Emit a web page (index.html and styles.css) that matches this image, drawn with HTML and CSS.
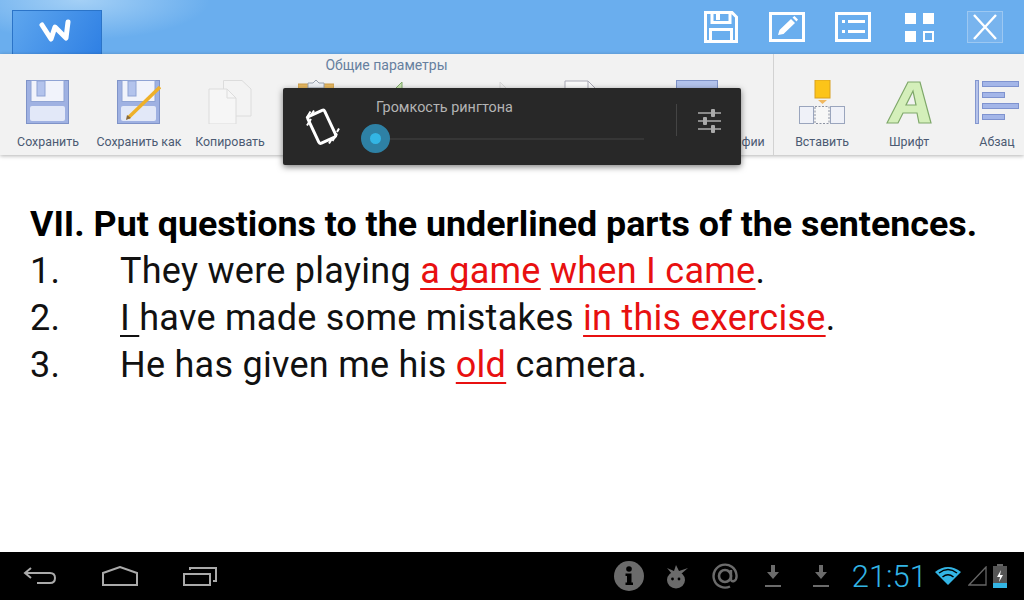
FILE: index.html
```html
<!DOCTYPE html>
<html lang="ru">
<head>
    <meta charset="UTF-8">
    <meta name="viewport" content="width=device-width, initial-scale=1.0">
    <title>Документ</title>
    <link rel="stylesheet" href="styles.css">
</head>
<body>
    <header class="topbar">
        <button class="logo">
            <svg width="40" height="30" viewBox="0 0 40 30"><path d="M5 7 L14 21 L18 9 L29 20 L31 4" fill="none" stroke="#fff" stroke-width="5" stroke-linecap="round" stroke-linejoin="round"/></svg>
        </button>
        <div class="top-icons">
            <div class="top-icon">
                <svg width="34" height="32" viewBox="0 0 34 32"><path d="M1.5 1.5H28L32.5 6V30.5H1.5Z M8 1.5V11.5H26V1.5 M6.5 31V18.5H27.5V31" fill="none" stroke="#fff" stroke-width="3"/><rect x="12" y="3" width="4" height="6" fill="#fff"/></svg>
            </div>
            <div class="top-icon">
                <svg width="36" height="30" viewBox="0 0 36 30"><rect x="1.5" y="1.5" width="33" height="27" fill="none" stroke="#fff" stroke-width="3"/><path d="M9 23 L10.5 18 L22 7 L26 11 L14.5 22 Z M23.5 5.5 L25.5 4 L29 7.5 L27.5 9.5 Z" fill="#fff"/></svg>
            </div>
            <div class="top-icon">
                <svg width="36" height="30" viewBox="0 0 36 30"><rect x="1.5" y="1.5" width="33" height="27" fill="none" stroke="#fff" stroke-width="3"/><path d="M7 9.5H10 M13 9.5H30 M7 19.5H10 M13 19.5H30" stroke="#fff" stroke-width="3"/></svg>
            </div>
            <div class="top-icon">
                <svg width="29" height="29" viewBox="0 0 29 29"><rect width="11" height="11" fill="#fff"/><rect x="18" width="11" height="11" fill="#fff"/><rect y="18" width="11" height="11" fill="#fff"/><rect x="19" y="19" width="9" height="9" fill="none" stroke="#fff" stroke-width="2"/></svg>
            </div>
            <div class="top-icon">
                <svg width="36" height="32" viewBox="0 0 36 32"><rect x="0.5" y="0.5" width="35" height="31" fill="#78b4ee" stroke="#9cc8f2"/><path d="M7 4 L29 28 M29 4 L7 28" stroke="#fff" stroke-width="2.4"/></svg>
            </div>
        </div>
    </header>

    <section class="ribbon">
        <div class="group group-main">
            <div class="group-title">Общие параметры</div>
            <div class="tools">
                <div class="tool">
                    <svg width="44" height="44" viewBox="0 0 44 44"><rect x="0.5" y="0.5" width="42" height="43" fill="#9fb1e2" stroke="#7f93c8"/><rect x="5" y="0.5" width="33" height="21" fill="#f1f3fb" stroke="#8fa3d4"/><rect x="11" y="1" width="8" height="15" fill="#b3c3ec" stroke="#8fa3d4"/><rect x="4" y="26" width="35" height="15" rx="2" fill="#e2e8f8"/></svg>
                    <span>Сохранить</span>
                </div>
                <div class="tool">
                    <svg width="44" height="44" viewBox="0 0 44 44"><rect x="0.5" y="0.5" width="42" height="43" fill="#9fb1e2" stroke="#7f93c8"/><rect x="5" y="0.5" width="33" height="21" fill="#f1f3fb" stroke="#8fa3d4"/><rect x="11" y="1" width="8" height="15" fill="#b3c3ec" stroke="#8fa3d4"/><rect x="4" y="26" width="35" height="15" rx="2" fill="#e2e8f8"/><path d="M11 38 L43 7" stroke="#eeb02a" stroke-width="3.5"/><path d="M9 40 L10 35 L14 38 Z" fill="#8a6a3a"/></svg>
                    <span>Сохранить как</span>
                </div>
                <div class="tool">
                    <svg width="44" height="44" viewBox="0 0 44 44"><path d="M15.5 0.5H34L43 9V36H15.5Z" fill="#f3f3f3" stroke="#dcdcdc"/><path d="M1 9H19L28 18V44H1Z" fill="#f6f6f6" stroke="#dcdcdc"/><path d="M19 9V18H28" fill="none" stroke="#dcdcdc"/></svg>
                    <span>Копировать</span>
                </div>
                <div class="tool">
                    <svg width="36" height="44" viewBox="0 0 36 44"><rect y="4" width="36" height="40" fill="#e8b960" stroke="#c99c48"/><path d="M10 8V3H15L18 0L21 3H26V8Z" fill="#eceff4" stroke="#9aa3b0"/></svg>
                    <span>Вставить</span>
                </div>
                <div class="tool">
                    <svg width="44" height="44" viewBox="0 0 44 44"><path d="M2 22 L22 2 V12 H42 V32 H22 V42 Z" fill="#cbe6b4" stroke="#7fa86a"/></svg>
                    <span>Отменить</span>
                </div>
                <div class="tool">
                    <svg width="44" height="44" viewBox="0 0 44 44"><path d="M42 22 L22 2 V12 H2 V32 H22 V42 Z" fill="#efefef" stroke="#d8d8d8"/></svg>
                    <span>Вернуть</span>
                </div>
                <div class="tool">
                    <svg width="34" height="44" viewBox="0 0 34 44"><path d="M1 1H24L33 10V43H1Z" fill="#fafafa" stroke="#a9a9b5"/><path d="M24 1V10H33" fill="none" stroke="#a9a9b5"/></svg>
                    <span>Поиск</span>
                </div>
                <div class="tool tool-last">
                    <svg width="42" height="44" viewBox="0 0 42 44"><rect x="0.5" y="0.5" width="41" height="43" fill="#b3c3ec" stroke="#7f93c8"/></svg>
                    <span>Параметры фотографии</span>
                </div>
            </div>
        </div>
        <div class="group">
            <div class="group-title">&nbsp;</div>
            <div class="tools tools-right">
                <div class="tool">
                    <svg width="46" height="44" viewBox="0 0 46 44"><rect x="16" y="0" width="15" height="18" fill="#fcc419" stroke="#d8a020"/><path d="M19 20H28L23.5 24Z" fill="#f0b860"/><rect x="0.5" y="26.5" width="14" height="17" fill="#eff1f8" stroke="#9aa5bd"/><rect x="16" y="26.5" width="14" height="17" fill="#f7f7f7" stroke="#8c93a3" stroke-dasharray="2 1.5"/><rect x="31.5" y="26.5" width="14" height="17" fill="#eff1f8" stroke="#9aa5bd"/></svg>
                    <span>Вставить</span>
                </div>
                <div class="tool">
                    <svg width="46" height="44" viewBox="0 0 46 44"><path d="M1 43 L22 2 H34 L45 43 H33 L31 33 H17 L12 43 Z M20 25 H30 L27 11 Z" fill="#d4efba" fill-rule="evenodd" stroke="#7fa86a" stroke-width="1.2"/></svg>
                    <span>Шрифт</span>
                </div>
                <div class="tool">
                    <svg width="44" height="44" viewBox="0 0 44 44"><rect x="0.5" y="0.5" width="3" height="43" fill="#b6c3ea" stroke="#8497cf"/><rect x="7.5" y="1.5" width="36" height="5" fill="#a4b6e8" stroke="#7f93cf"/><rect x="7.5" y="12.5" width="22" height="5" fill="#a4b6e8" stroke="#7f93cf"/><rect x="7.5" y="23.5" width="36" height="5" fill="#a4b6e8" stroke="#7f93cf"/><rect x="7.5" y="34.5" width="22" height="5" fill="#a4b6e8" stroke="#7f93cf"/></svg>
                    <span>Абзац</span>
                </div>
            </div>
        </div>

        <div class="volume-panel">
            <div class="volume-icon">
                <svg width="36" height="38" viewBox="0 0 36 38"><rect x="8.5" y="5" width="18.5" height="29.5" rx="2" transform="rotate(-25 17.7 19.7)" fill="none" stroke="#fff" stroke-width="3"/><path d="M2.5 11 L6.5 4.5 M3 18.5 L7 12 M7.5 7.5 L10 3.5 M28.5 34 L33 26.5 M33 25 L35 21.5 M25 36.5 L27.5 32.5" stroke="#fff" stroke-width="2"/></svg>
            </div>
            <div class="volume-body">
                <div class="volume-label">Громкость рингтона</div>
                <div class="volume-track"><div class="volume-thumb"></div></div>
            </div>
            <div class="volume-settings">
                <svg width="26" height="26" viewBox="0 0 26 26"><path d="M1 5H24 M1 13H24 M1 21H24" stroke="#aaa" stroke-width="1.3"/><rect x="14" y="1" width="4" height="8" rx="1" fill="#aaa"/><rect x="6" y="9" width="4" height="8" rx="1" fill="#aaa"/><rect x="14" y="17" width="4" height="8" rx="1" fill="#aaa"/></svg>
            </div>
        </div>
    </section>

    <main class="doc">
        <p class="doc-title">VII. Put questions to the underlined parts of the sentences.</p>
        <div class="doc-line"><span>1.</span><p>They were playing <u class="red">a game</u> <u class="red">when I came</u>.</p></div>
        <div class="doc-line"><span>2.</span><p><u>I </u>have made some mistakes <u class="red">in this exercise</u>.</p></div>
        <div class="doc-line"><span>3.</span><p>He has given me his <u class="red">old</u> camera.</p></div>
    </main>

    <footer class="navbar">
        <div class="nav-keys">
            <div class="nav-key">
                <svg width="34" height="20" viewBox="0 0 34 20"><path d="M8 2 L2 7 L8 12 M2 7 H27 Q32 7 32 12 Q32 17 27 17 H14" fill="none" stroke="#aaa" stroke-width="2"/></svg>
            </div>
            <div class="nav-key">
                <svg width="38" height="20" viewBox="0 0 38 20"><path d="M2 7 L19 1 L36 7 V19 H2 Z" fill="none" stroke="#aaa" stroke-width="2"/></svg>
            </div>
            <div class="nav-key">
                <svg width="34" height="20" viewBox="0 0 34 20"><rect x="1" y="8" width="26" height="11" fill="none" stroke="#aaa" stroke-width="2"/><path d="M7 4 V2 H33 V15 H30" fill="none" stroke="#aaa" stroke-width="2"/></svg>
            </div>
        </div>
        <div class="status">
            <div class="status-icon">
                <svg width="30" height="30" viewBox="0 0 30 30"><circle cx="15" cy="15" r="15" fill="#6b6b6b"/><circle cx="15" cy="8" r="2.8" fill="#000"/><path d="M11.5 12.5H17.5V21.5H19V24H11.5V21.5H13V15H11.5Z" fill="#000"/></svg>
            </div>
            <div class="status-icon">
                <svg width="24" height="26" viewBox="0 0 24 26"><ellipse cx="11" cy="17" rx="9" ry="8.5" fill="#6b6b6b"/><path d="M2 5 L9 8 L11 2 L14 8 L23 5 L16 11 H7Z" fill="#6b6b6b"/><circle cx="7.5" cy="16" r="1.4" fill="#000"/><circle cx="14" cy="16" r="1.4" fill="#000"/></svg>
            </div>
            <div class="status-icon">
                <svg width="26" height="26" viewBox="0 0 26 26"><circle cx="13" cy="13" r="6" fill="none" stroke="#6b6b6b" stroke-width="2.6"/><path d="M19 7 V16 Q19 19 22 18 Q25 17 24.5 12 A11.5 11.5 0 1 0 18 23.5" fill="none" stroke="#6b6b6b" stroke-width="2.4"/></svg>
            </div>
            <div class="status-icon">
                <svg width="16" height="24" viewBox="0 0 16 24"><path d="M6 1H10V8H14L8 15L2 8H6Z M0 21H16V23H0Z" fill="#6b6b6b"/></svg>
            </div>
            <div class="status-icon">
                <svg width="16" height="24" viewBox="0 0 16 24"><path d="M6 1H10V8H14L8 15L2 8H6Z M0 21H16V23H0Z" fill="#6b6b6b"/></svg>
            </div>
            <div class="clock">21:51</div>
            <svg class="wifi" width="26" height="20" viewBox="0 0 26 20"><path d="M13 19 L0 6 Q13 -4 26 6 Z" fill="#33b5e5"/><path d="M4 7 Q13 0 22 7 M7.5 11 Q13 6.5 18.5 11" fill="none" stroke="#000" stroke-width="1.5"/></svg>
            <svg class="signal" width="19" height="20" viewBox="0 0 19 20"><path d="M1 19 H18 V1 Z" fill="none" stroke="#666" stroke-width="1.3"/></svg>
            <svg class="battery" width="14" height="24" viewBox="0 0 14 24"><rect x="4" y="0" width="6" height="2" fill="#666"/><rect y="2" width="14" height="22" fill="#555"/><rect y="19" width="14" height="5" fill="#33b5e5"/><path d="M8 6 L4 13 H7 L6 18 L10 11 H7 Z" fill="#fff"/></svg>
        </div>
    </footer>
</body>
</html>
```

FILE: styles.css
```css
* {
    box-sizing: border-box;
}
html, body {
    height: 100%;
}
body {
    margin: 0;
    width: 1024px;
    height: 600px;
    overflow: hidden;
    display: flex;
    flex-direction: column;
    font-family: Roboto, "Noto Sans", sans-serif;
    background: #fff;
}
svg {
    display: block;
    flex: none;
}

/* top bar */
.topbar {
    height: 54px;
    display: flex;
    justify-content: space-between;
    background: radial-gradient(ellipse 130px 40px at 80px 0, #a4d0f6, rgba(164, 208, 246, 0)), #6aaeee;
}
.logo {
    width: 90px;
    height: 44px;
    margin: 10px 0 0 12px;
    padding: 0;
    display: flex;
    align-items: center;
    justify-content: center;
    border: 1px solid #2b74c8;
    border-bottom: 0;
    background: linear-gradient(120deg, #5ea6ee, #2f80e4);
}
.top-icons {
    display: flex;
    padding-right: 6px;
}
.top-icon {
    width: 66px;
    height: 54px;
    display: flex;
    align-items: center;
    justify-content: center;
}

/* ribbon */
.ribbon {
    position: relative;
    z-index: 1;
    height: 101px;
    display: flex;
    background: #f2f2f2;
    box-shadow: 0 1px 4px rgba(0, 0, 0, 0.3);
}
.group {
    flex: 1;
    min-width: 0;
}
.group-main {
    flex: none;
    width: 774px;
    border-right: 1px solid #d2d2d2;
}
.group-title {
    height: 26px;
    padding-top: 3px;
    font-size: 14px;
    line-height: 16px;
    text-align: center;
    color: #66809f;
}
.tools {
    display: grid;
    grid-template-columns: 96px 86px 96px 76px 96px 100px 62px 161px;
}
.tools-right {
    grid-template-columns: 96px 78px 98px;
}
.tool {
    display: flex;
    flex-direction: column;
    align-items: center;
    font-size: 12.4px;
    line-height: 14px;
    color: #4b5a72;
    white-space: nowrap;
}
.tool-last {
    padding-left: 9px;
}
.tool span {
    margin-top: 11px;
}
.tool-last span {
    margin-right: 6px;
}

/* volume popup */
.volume-panel {
    position: absolute;
    left: 283px;
    top: 34px;
    width: 458px;
    height: 77px;
    display: flex;
    background: #282828;
    border-radius: 2px;
    box-shadow: 0 2px 6px rgba(0, 0, 0, 0.5);
}
.volume-icon {
    width: 78px;
    padding: 19px 0 0 21px;
}
.volume-body {
    width: 315px;
    padding-top: 12px;
}
.volume-label {
    padding-left: 15px;
    font-size: 14.4px;
    line-height: 16px;
    color: #b4b4b4;
}
.volume-track {
    position: relative;
    height: 2px;
    width: 268px;
    margin: 22px 0 0 15px;
    background: #363636;
}
.volume-thumb {
    position: absolute;
    left: -15px;
    top: -14px;
    width: 29px;
    height: 29px;
    border-radius: 50%;
    border: 9px solid #2e81a5;
    background: #33b5e5;
}
.volume-settings {
    height: 32px;
    margin-top: 16px;
    padding: 4px 0 0 20px;
    border-left: 1px solid #444;
}

/* document */
.doc {
    flex: 1;
    padding: 45px 30px 0;
    font-size: 36px;
    line-height: 47px;
    letter-spacing: 0.27px;
    color: #111;
}
.doc u {
    text-decoration-thickness: 1.5px;
    text-underline-offset: 5px;
    text-decoration-skip-ink: none;
}
.doc p {
    margin: 0;
}
.doc .doc-title {
    font-size: 35.8px;
    line-height: 48px;
    font-weight: 700;
    letter-spacing: 0;
    color: #000;
    white-space: nowrap;
}
.doc-line {
    display: grid;
    grid-template-columns: 90px 1fr;
}
.red {
    color: #e81010;
}

/* android bar */
.navbar {
    height: 48px;
    display: flex;
    justify-content: space-between;
    background: #000;
}
.nav-keys {
    display: flex;
}
.nav-key {
    width: 80px;
    height: 48px;
    display: flex;
    align-items: center;
    justify-content: center;
}
.status {
    display: flex;
    align-items: center;
    padding-right: 17px;
}
.status-icon {
    width: 48px;
    display: flex;
    justify-content: center;
}
.clock {
    margin: 0 8px 0 7px;
    font-size: 31px;
    font-weight: 300;
    color: #33b5e5;
}
.signal {
    margin-left: 7px;
}
.battery {
    margin-left: 6px;
}
```
